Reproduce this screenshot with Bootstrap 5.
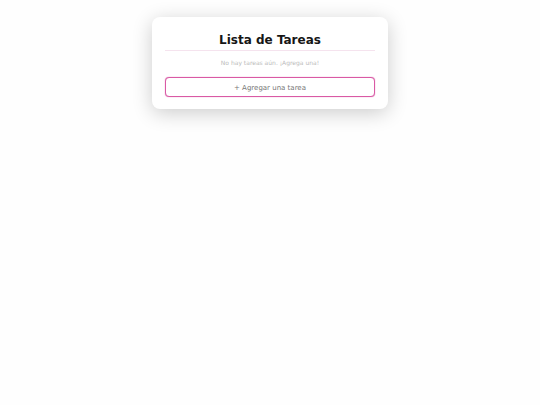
<!DOCTYPE html>
<html lang="es">
<head>
<meta charset="utf-8">
<meta name="viewport" content="width=device-width, initial-scale=1">
<title>Lista de Tareas</title>
<link href="https://cdn.jsdelivr.net/npm/bootstrap@5.3.0/dist/css/bootstrap.min.css" rel="stylesheet">
<style>
body { font-family: "DejaVu Sans", Verdana, sans-serif; background: #fefefe; padding-top: 17px; }
.todo-card { max-width: 236px; padding: 13px 13px 12px; border-radius: 8px; box-shadow: 0 4px 20px rgba(0, 0, 0, .2); }
.todo-title { font-size: 12px; line-height: 20px; color: #161616; border-bottom: 1px solid #f5e3ee; }
.todo-empty { font-size: 6px; line-height: 10px; margin: 7px 0 9px; color: #bbb; }
.todo-add { font-size: 7px; line-height: 10px; padding: 5px 4px 3px; border: 1px solid #d95aa5; border-radius: 4px; color: #777; background: #fff; box-shadow: 0 0 1px #d95aa5; }
.todo-add:hover { color: #777; border-color: #c03088; background: #fff5fa; }
</style>
</head>
<body class="min-vh-100">
<main class="card todo-card w-100 mx-auto border-0 bg-white text-center">
  <h1 class="todo-title fw-bold mb-0">Lista de Tareas</h1>
  <p class="todo-empty">No hay tareas aún. ¡Agrega una!</p>
  <button type="button" class="btn todo-add w-100">+ Agregar una tarea</button>
</main>
<script src="https://cdn.jsdelivr.net/npm/bootstrap@5.3.0/dist/js/bootstrap.bundle.min.js"></script>
</body>
</html>
